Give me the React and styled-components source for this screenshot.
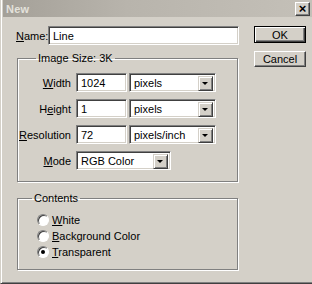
import styled, { createGlobalStyle } from "styled-components";

const GlobalStyle = createGlobalStyle`
  html, body {
    margin: 0;
    padding: 0;
    background: #d4d0c8;
  }
  body {
    font-family: "Liberation Sans", Arial, sans-serif;
    font-size: 11px;
    color: #000;
  }
`;

function App() {
  return (
    <>
      <GlobalStyle />
      <Window>
        <TitleBar>
          <Title>New</Title>
          <CloseButton>×</CloseButton>
        </TitleBar>
        <Body>
          <Main>
            <NameRow>
              <Label>
                <u>N</u>ame:
              </Label>
              <TextInput $width="191px">Line</TextInput>
            </NameRow>

            <Group>
              <Legend>Image Size: 3K</Legend>
              <SizeGrid>
                <FieldLabel>
                  <u>W</u>idth
                </FieldLabel>
                <TextInput>1024</TextInput>
                <Select $width="87px">pixels</Select>

                <FieldLabel>
                  H<u>e</u>ight
                </FieldLabel>
                <TextInput>1</TextInput>
                <Select $width="87px">pixels</Select>

                <FieldLabel>
                  <u>R</u>esolution
                </FieldLabel>
                <TextInput>72</TextInput>
                <Select $width="87px">pixels/inch</Select>

                <FieldLabel>
                  <u>M</u>ode
                </FieldLabel>
                <ModeCell>
                  <Select $width="95px">RGB Color</Select>
                </ModeCell>
              </SizeGrid>
            </Group>

            <Group $contents>
              <Legend $contents>Contents</Legend>
              <RadioList>
                <RadioRow>
                  <Radio />
                  <span>
                    <u>W</u>hite
                  </span>
                </RadioRow>
                <RadioRow>
                  <Radio />
                  <span>
                    <u>B</u>ackground Color
                  </span>
                </RadioRow>
                <RadioRow>
                  <Radio $checked />
                  <span>
                    <u>T</u>ransparent
                  </span>
                </RadioRow>
              </RadioList>
            </Group>
          </Main>

          <Side>
            <Button $default>OK</Button>
            <Button>Cancel</Button>
          </Side>
        </Body>
      </Window>
    </>
  );
}

const Window = styled.div`
  box-sizing: border-box;
  width: 312px;
  height: 284px;
  background: #d4d0c8;
  border-left: 1px solid #d4d0c8;
  border-bottom: 1px solid #404040;
  box-shadow: inset 1px 0 #fff, inset 0 -1px #808080;
  padding: 0 0 0 2px;
  display: flex;
  flex-direction: column;
`;

const TitleBar = styled.div`
  height: 17px;
  display: flex;
  align-items: center;
  justify-content: space-between;
  background: linear-gradient(to right, #a4a098, #b8b4ac 40%, #c4c0b8);
  padding: 0 2px 0 3px;
`;

const Title = styled.span`
  font-weight: bold;
  font-size: 11px;
  color: #e4e2dc;
  letter-spacing: 0.2px;
`;

const CloseButton = styled.div`
  box-sizing: border-box;
  width: 15px;
  height: 14px;
  display: flex;
  align-items: center;
  justify-content: center;
  background: #d4d0c8;
  border: 1px solid;
  border-color: #fff #404040 #404040 #fff;
  box-shadow: inset -1px -1px #808080;
  font-weight: bold;
  font-size: 13px;
  line-height: 1;
  color: #000;
`;

const Body = styled.div`
  display: flex;
  padding: 9px 0 0 13px;
`;

const Main = styled.div`
  width: 224px;
  display: flex;
  flex-direction: column;
`;

const NameRow = styled.div`
  display: flex;
  align-items: center;
  gap: 6px;
`;

const Label = styled.span`
  width: 26px;
`;

const sunken = `
  box-sizing: border-box;
  background: #fff;
  border: 1px solid;
  border-color: #808080 #fff #fff #808080;
  box-shadow: inset 1px 1px #404040, inset -1px -1px #d4d0c8;
`;

const TextInput = styled.div`
  ${sunken}
  width: ${(p) => p.$width || "51px"};
  height: 19px;
  padding: 0 4px;
  display: flex;
  align-items: center;
`;

const Group = styled.fieldset`
  margin: ${(p) => (p.$contents ? "10px" : "7px")} 0 0 1px;
  width: 221px;
  box-sizing: border-box;
  border: 1px solid #808080;
  box-shadow: inset 1px 1px #fff, 1px 1px #fff;
  padding: ${(p) => (p.$contents ? "7px 0 9px 0" : "8px 0 11px 0")};
`;

const Legend = styled.legend`
  margin-left: ${(p) => (p.$contents ? "14px" : "18px")};
  padding: 0 2px;
  line-height: 13px;
`;

const SizeGrid = styled.div`
  display: grid;
  grid-template-columns: 56px 51px 87px;
  column-gap: 2px;
  row-gap: 7px;
  align-items: center;
`;

const FieldLabel = styled.span`
  text-align: right;
  padding-right: 3px;
`;

const ModeCell = styled.div`
  grid-column: 2 / span 2;
`;

const Select = styled.div`
  ${sunken}
  width: ${(p) => p.$width};
  height: 19px;
  padding-left: 4px;
  display: flex;
  align-items: center;
  position: relative;

  &::after {
    content: "";
    position: absolute;
    right: 2px;
    top: 2px;
    width: 15px;
    height: 15px;
    box-sizing: border-box;
    background: #d4d0c8;
    border: 1px solid;
    border-color: #d4d0c8 #404040 #404040 #d4d0c8;
    box-shadow: inset 1px 1px #fff, inset -1px -1px #808080;
  }

  &::before {
    content: "";
    position: absolute;
    right: 7px;
    top: 8px;
    border-left: 3px solid transparent;
    border-right: 3px solid transparent;
    border-top: 3px solid #000;
    z-index: 1;
  }
`;

const RadioList = styled.div`
  display: flex;
  flex-direction: column;
  padding-left: 19px;
`;

const RadioRow = styled.div`
  display: flex;
  align-items: center;
  gap: 3px;
  height: 16px;
`;

const Radio = styled.span`
  box-sizing: border-box;
  width: 12px;
  height: 12px;
  border-radius: 50%;
  background: #fff;
  border: 1px solid;
  border-color: #808080 #fff #fff #808080;
  box-shadow: inset 1px 1px #404040;
  display: flex;
  align-items: center;
  justify-content: center;

  &::after {
    content: "";
    width: 4px;
    height: 4px;
    border-radius: 50%;
    background: ${(p) => (p.$checked ? "#000" : "transparent")};
  }
`;

const Side = styled.div`
  display: flex;
  flex-direction: column;
  gap: 8px;
  margin-left: 14px;
`;

const Button = styled.div`
  box-sizing: border-box;
  width: 52px;
  height: ${(p) => (p.$default ? "17px" : "16px")};
  display: flex;
  align-items: center;
  justify-content: center;
  background: #d4d0c8;
  border: 1px solid;
  border-color: ${(p) => (p.$default ? "#000" : "#fff #404040 #404040 #fff")};
  box-shadow: ${(p) =>
    p.$default
      ? "inset 1px 1px #fff, inset -1px -1px #404040, inset -2px -2px #808080"
      : "inset -1px -1px #808080"};
`;

export default App;
